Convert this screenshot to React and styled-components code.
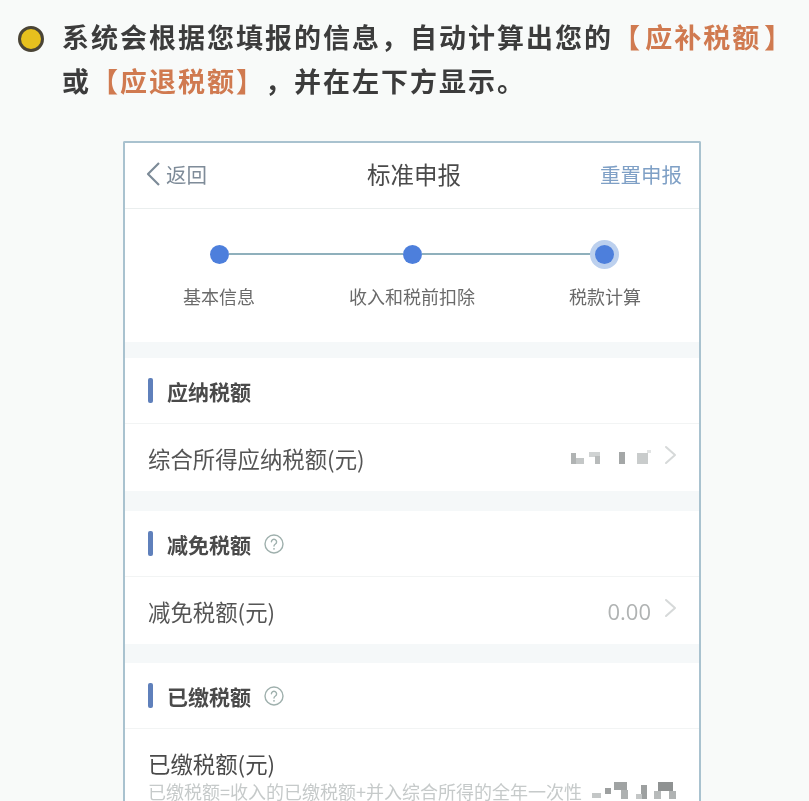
import React from "react";
import styled, { createGlobalStyle } from "styled-components";

const GlobalStyle = createGlobalStyle`
  html, body {
    margin: 0;
    padding: 0;
    background: #f8faf9;
  }
  body {
    font-family: "Noto Sans CJK SC", "Noto Sans", sans-serif;
  }
`;

const Page = styled.div`
  width: 809px;
  height: 801px;
  overflow: hidden;
  background: #f8faf9;
  filter: blur(0.6px);
`;

const Intro = styled.div`
  display: flex;
  align-items: flex-start;
  gap: 18px;
  padding: 15px 0 0 18px;
  height: 141px;
  box-sizing: border-box;
`;

const Bullet = styled.span`
  flex: none;
  width: 26px;
  height: 26px;
  margin-top: 11px;
  box-sizing: border-box;
  border-radius: 50%;
  border: 3.5px solid #4a4436;
  background: #e6c01e;
`;

const IntroText = styled.p`
  margin: 0;
  font-size: 27px;
  line-height: 44px;
  letter-spacing: 2px;
  font-weight: 700;
  white-space: nowrap;
  text-spacing-trim: space-all;
  color: #3c3c3c;
`;

const Mark = styled.span`
  color: #d07a50;
  word-spacing: -5px;
`;

const Card = styled.div`
  width: 578px;
  margin-left: 123px;
  box-sizing: border-box;
  height: 700px;
  background: #fff;
  border: 2px solid #a9c2cf;
  border-bottom: none;
  border-radius: 2px 2px 0 0;
`;

const Header = styled.header`
  display: grid;
  grid-template-columns: 1fr auto 1fr;
  align-items: center;
  height: 66px;
  box-sizing: border-box;
  padding: 0 17px 4px 21px;
  border-bottom: 1px solid #eaeeee;
`;

const Back = styled.div`
  display: flex;
  align-items: center;
  gap: 5px;
  font-size: 20.5px;
  color: #7f8c99;
`;

const Title = styled.div`
  font-size: 23.5px;
  color: #4a4a4a;
`;

const Reset = styled.div`
  justify-self: end;
  font-size: 20.5px;
  color: #7fa0c6;
`;

const Steps = styled.div`
  height: 133px;
  padding-top: 35px;
  box-sizing: border-box;
`;

const Track = styled.div`
  display: flex;
  align-items: center;
  height: 20px;
  margin: 0 85px;
`;

const Dot = styled.span`
  flex: none;
  width: 19px;
  height: 19px;
  border-radius: 50%;
  background: #4d7fdc;
  box-shadow: ${(p) => (p.$active ? "0 0 0 5px #bcd0ee" : "none")};
`;

const Line = styled.span`
  flex: 1;
  height: 2px;
  background: #8fb0bc;
`;

const StepLabels = styled.div`
  display: grid;
  grid-template-columns: repeat(3, 193px);
  justify-content: center;
  margin-top: 19px;
`;

const StepLabel = styled.span`
  text-align: center;
  font-size: 18px;
  line-height: 26px;
  color: #6a6a6a;
`;

const Band = styled.div`
  height: ${(p) => p.$h}px;
  background: #f5f8f9;
`;

const SectionHead = styled.div`
  display: flex;
  align-items: center;
  height: 66px;
  padding: 0 23px;
  box-sizing: border-box;
  border-bottom: 1px solid #f2f4f4;
`;

const SectionBar = styled.span`
  flex: none;
  width: 5px;
  height: 25px;
  margin-right: 14px;
  border-radius: 2px;
  background: #5f80bb;
`;

const SectionTitle = styled.span`
  font-size: 21px;
  font-weight: 700;
  color: #4a4a4a;
`;

const Help = styled.span`
  display: inline-flex;
  margin-left: 13px;
`;

const Row = styled.div`
  display: flex;
  align-items: center;
  justify-content: space-between;
  height: 67px;
  padding: 0 22px 0 23px;
`;

const RowLabel = styled.span`
  font-size: 22.4px;
  color: #555;
`;

const RowValue = styled.div`
  display: flex;
  align-items: center;
  gap: 13px;
  font-family: "Open Sans", "Noto Sans", sans-serif;
  font-size: 22px;
  color: #b0b3b3;
`;

const ChevronWrap = styled.span`
  display: inline-flex;
  margin-top: -5px;
`;

const MosaicBox = styled.svg`
  flex: none;
  filter: blur(0.7px);
`;

const LastRow = styled.div`
  padding: 19px 23px 0 23px;
`;

const LastLabel = styled.div`
  font-size: 22.4px;
  line-height: 30px;
  color: #4a4a4a;
`;

const Note = styled.div`
  display: flex;
  align-items: center;
  justify-content: space-between;
  font-size: 18px;
  line-height: 26px;
  white-space: nowrap;
  color: #c6caca;
`;

const Chevron = () => (
  <ChevronWrap>
    <svg width="13" height="20" viewBox="0 0 13 20" fill="none">
      <path d="M2 2l9 8-9 8" stroke="#d6d9d9" strokeWidth="2" strokeLinecap="round" strokeLinejoin="round" />
    </svg>
  </ChevronWrap>
);

const BackChevron = () => (
  <svg width="15" height="26" viewBox="0 0 15 26" fill="none">
    <path d="M13 2L2 13l11 11" stroke="#7d8b98" strokeWidth="2.2" strokeLinejoin="round" />
  </svg>
);

const HelpIcon = () => (
  <svg width="20" height="20" viewBox="0 0 20 20" fill="none">
    <circle cx="10" cy="10" r="9" stroke="#9fb0ad" strokeWidth="1.4" />
    <path
      d="M7.4 7.8a2.6 2.6 0 1 1 4 2.2c-.9.6-1.4 1-1.4 2.1"
      stroke="#9fb0ad"
      strokeWidth="1.4"
      strokeLinecap="round"
    />
    <circle cx="10" cy="14.8" r="0.9" fill="#9fb0ad" />
  </svg>
);

// pixelated amounts that were blanked out in the source image
const Mosaic = ({ width, height, cells }) => (
  <MosaicBox width={width} height={height} viewBox={`0 0 ${width} ${height}`}>
    {cells.map(([x, y, w, h, fill], i) => (
      <rect key={i} x={x} y={y} width={w} height={h} fill={fill} />
    ))}
  </MosaicBox>
);

const amountCells = [
  [0, 3, 5, 11, "#b0b3b3"],
  [5, 8, 8, 6, "#c4c7c7"],
  [18, 2, 11, 5, "#d0d3d3"],
  [24, 6, 5, 8, "#b8bbbb"],
  [48, 2, 6, 12, "#a4a7a7"],
  [66, 3, 11, 11, "#c9cccc"],
  [76, 0, 4, 3, "#e2e4e4"],
];

const noteCells = [
  [0, 11, 9, 5, "#c4c7c7"],
  [13, 6, 6, 6, "#9da0a0"],
  [22, 0, 13, 8, "#a0a3a3"],
  [29, 8, 7, 9, "#aeb1b1"],
  [49, 3, 6, 14, "#9da0a0"],
  [44, 12, 6, 5, "#c4c7c7"],
  [66, 0, 15, 9, "#8f9292"],
  [62, 9, 7, 8, "#b8bbbb"],
  [77, 9, 7, 8, "#b0b3b3"],
];

export default function App() {
  return (
    <Page>
      <GlobalStyle />
      <Intro>
        <Bullet />
        <IntroText>
          系统会根据您填报的信息，自动计算出您的<Mark>【 应补税额 】</Mark>
          <br />
          或<Mark>【应退税额】</Mark>，并在左下方显示。
        </IntroText>
      </Intro>
      <Card>
        <Header>
          <Back>
            <BackChevron />
            返回
          </Back>
          <Title>标准申报</Title>
          <Reset>重置申报</Reset>
        </Header>
        <Steps>
          <Track>
            <Dot />
            <Line />
            <Dot />
            <Line />
            <Dot $active />
          </Track>
          <StepLabels>
            <StepLabel>基本信息</StepLabel>
            <StepLabel>收入和税前扣除</StepLabel>
            <StepLabel>税款计算</StepLabel>
          </StepLabels>
        </Steps>
        <Band $h={16} />
        <SectionHead>
          <SectionBar />
          <SectionTitle>应纳税额</SectionTitle>
        </SectionHead>
        <Row>
          <RowLabel>综合所得应纳税额(元)</RowLabel>
          <RowValue>
            <Mosaic width={80} height={16} cells={amountCells} />
            <Chevron />
          </RowValue>
        </Row>
        <Band $h={20} />
        <SectionHead>
          <SectionBar />
          <SectionTitle>减免税额</SectionTitle>
          <Help>
            <HelpIcon />
          </Help>
        </SectionHead>
        <Row>
          <RowLabel>减免税额(元)</RowLabel>
          <RowValue>
            0.00
            <Chevron />
          </RowValue>
        </Row>
        <Band $h={19} />
        <SectionHead>
          <SectionBar />
          <SectionTitle>已缴税额</SectionTitle>
          <Help>
            <HelpIcon />
          </Help>
        </SectionHead>
        <LastRow>
          <LastLabel>已缴税额(元)</LastLabel>
          <Note>
            已缴税额=收入的已缴税额+并入综合所得的全年一次性
            <Mosaic width={84} height={18} cells={noteCells} />
          </Note>
        </LastRow>
      </Card>
    </Page>
  );
}
